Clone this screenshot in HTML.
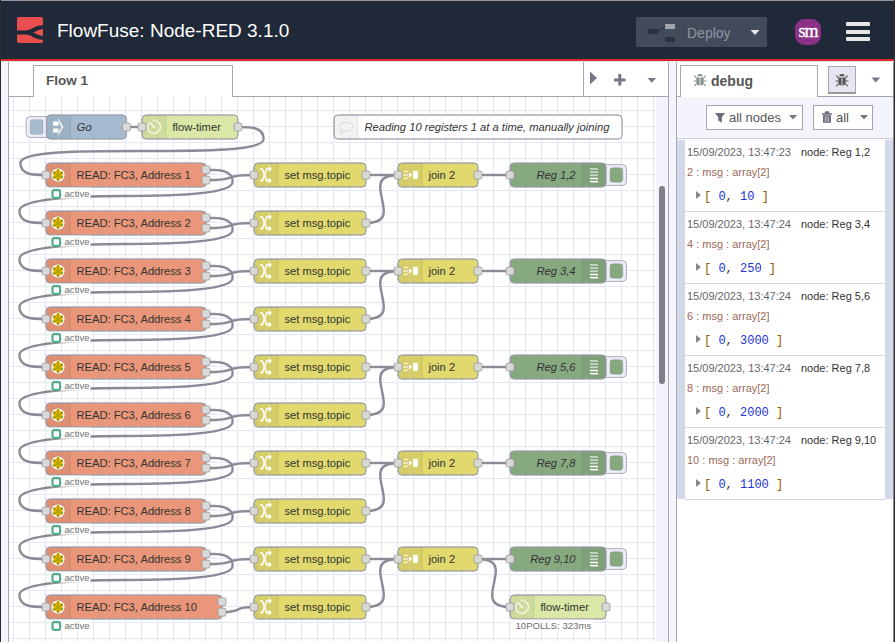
<!DOCTYPE html>
<html><head><meta charset="utf-8">
<style>
*{box-sizing:border-box}
html,body{margin:0;padding:0}
body{width:895px;height:642px;overflow:hidden;position:relative;background:#fff;font-family:"Liberation Sans",sans-serif}
.abs{position:absolute}
#topline{left:0;top:0;width:895px;height:1px;background:#9d939a}
#leftline{left:0;top:0;width:1px;height:642px;background:#2b2b2f}
#header{left:1px;top:1px;width:894px;height:58px;background:#1f2937}
#redline{left:1px;top:59px;width:894px;height:2px;background:#db2a2c}
#paleline{left:1px;top:61px;width:893px;height:1px;background:#e3e8ef}
#logo{left:17px;top:17px;width:26px;height:26px;border-radius:2px;background:#ea4f4f;overflow:hidden}
#title{left:57px;top:18.5px;font-size:19px;color:#fff;white-space:nowrap;line-height:24px}
#deploy{left:636px;top:17px;width:131px;height:30px;background:#414b59}
#deploytxt{left:687px;top:24px;font-size:14px;color:#8d97a3;line-height:18px}
#avatar{left:795px;top:19px;width:26px;height:26px;border-radius:9.5px;background:#8a3288;color:#fff;font-family:"Liberation Serif",serif;font-size:18px;text-align:center;line-height:25px;letter-spacing:-1.1px;padding-left:0px;-webkit-text-stroke:0.35px #fff}
.hb{left:846px;width:24px;height:4px;background:#e6e6e6;border-radius:1px}
#wsleft{left:1px;top:61px;width:7px;height:581px;background:#f3f4fc}
#wsborderL{left:8px;top:61px;width:1px;height:581px;background:#a6a6b2}
#tabbar{left:9px;top:61px;width:659px;height:36px;background:#fff;border-bottom:1px solid #a6a6b2}
#tab1{left:33px;top:65px;width:200px;height:32px;background:#fff;border:1px solid #a6a6b2;border-bottom:none}
#tab1txt{left:46px;top:72.5px;font-size:13.5px;font-weight:bold;color:#555;line-height:16px}
#tabdiv{left:583px;top:61px;width:1px;height:35px;background:#a6a6b2}
#wsborderR{left:668px;top:61px;width:1px;height:581px;background:#a6a6b2}
#sep{left:669px;top:61px;width:7px;height:581px;background:#f3f4fc}
#sbborder{left:676px;top:61px;width:1px;height:581px;background:#a6a6b2}
#sidebar{left:677px;top:61px;width:216px;height:581px;background:#fff}
#redge{left:894px;top:0px;width:1px;height:642px;background:#2f2b30}
#redge2{left:893px;top:61px;width:1px;height:581px;background:#8e8c92}
#sbtabbar{left:677px;top:61px;width:216px;height:36px;background:#fff;border-bottom:1px solid #a6a6b2}
#dbgtab{left:680px;top:65px;width:138px;height:32px;background:#fff;border:1px solid #a6a6b2;border-bottom:none}
#dbgtxt{left:711px;top:72.5px;font-size:14px;font-weight:bold;color:#555;line-height:16px}
#bugbtn{left:828px;top:66px;width:28px;height:28px;background:#e6e6f2;border:1px solid #a6a6b2;border-bottom:2px solid #999}
#toolbar{left:677px;top:97px;width:216px;height:42px;background:#f3f4fc;border-bottom:1px solid #cdcdd6}
.tbtn{top:105px;height:25px;background:#fff;border:1px solid #a6a6b2}
.tbtxt{top:110px;font-size:13px;color:#555;line-height:16px;white-space:nowrap}
#scrolltrack{left:656px;top:97px;width:12px;height:545px;background:#f3f4fc}
#thumb{left:659px;top:186px;width:6px;height:198px;background:#7f7f8a;border-radius:3px}
#msgs{left:677px;top:140px;width:216px;height:359px;background:#d4d9ea}
.msg{position:absolute;left:685px;width:200px;height:72px;background:#fff;border-bottom:1px solid #d4d9ea}
.mtime{position:absolute;left:2px;top:5px;font-size:11px;color:#666;white-space:nowrap;line-height:14px}
.mnode{position:absolute;left:116px;top:5px;font-size:11px;color:#333;white-space:nowrap;line-height:14px}
.mtopic{position:absolute;left:2px;top:25px;font-size:11px;color:#a0685a;white-space:nowrap;line-height:14px}
.mval{position:absolute;left:11px;top:50px;font-family:"Liberation Mono",monospace;font-size:12px;color:#333;white-space:pre;line-height:14px}
.num{color:#2033d6}
.br{color:#8a5a00}
.tri{display:inline-block;width:0;height:0;border-left:5px solid #888;border-top:4px solid transparent;border-bottom:4px solid transparent;margin-right:3px;vertical-align:1px}
svg text.lbl{font-family:"Liberation Sans",sans-serif;font-size:11.2px;fill:#333}
svg text.st{font-family:"Liberation Sans",sans-serif;font-size:9.6px;fill:#6e6e6e}
svg .port{fill:#d9d9d9;stroke:#999;stroke-width:0.8}
</style></head><body>
<div id="header" class="abs"></div>
<div id="topline" class="abs"></div>
<div id="leftline" class="abs"></div>
<div id="redline" class="abs"></div>
<div id="logo" class="abs"><svg width="26" height="26" viewBox="0 0 26 26"><g fill="none" stroke="#1f2937" stroke-width="4.2"><path d="M0 15.5 H9 C16 15.5 18 10 26 10"/><path d="M9 15.5 C16 15.5 18 21 26 21"/></g></svg></div>
<div id="title" class="abs">FlowFuse: Node-RED 3.1.0</div>
<div id="deploy" class="abs"></div>
<svg class="abs" style="left:636px;top:17px" width="131" height="30">
<rect x="12" y="12" width="10" height="5" fill="#2a323e"/><path d="M21.5 14.5 L29.5 9" stroke="#2a323e" stroke-width="1.2"/><rect x="29" y="7" width="10" height="5" fill="#a3a3ad"/><rect x="29" y="20" width="10" height="5" fill="#2a323e"/>
<path d="M114.5 13 h9 l-4.5 5 z" fill="#e8e8ee"/>
</svg>
<div id="deploytxt" class="abs">Deploy</div>
<div id="avatar" class="abs">sm</div>
<div class="abs hb" style="top:22px"></div>
<div class="abs hb" style="top:30px"></div>
<div class="abs hb" style="top:37px"></div>

<div id="wsleft" class="abs"></div>
<div id="wsborderL" class="abs"></div>
<div id="tabbar" class="abs"></div>
<div id="tab1" class="abs"></div>
<div id="tab1txt" class="abs">Flow 1</div>
<div id="tabdiv" class="abs"></div>
<svg class="abs" style="left:584px;top:61px" width="84" height="35">
<path d="M6 10.5 L13 17 L6 23.5 z" fill="#777784"/>
<path d="M30 19 h11.5 M35.75 13 v11.5" stroke="#777784" stroke-width="3"/>
<path d="M63.5 17 h8.6 l-4.3 4.8 z" fill="#777784"/>
</svg>
<div id="wsborderR" class="abs"></div>
<div id="sep" class="abs"></div>
<div id="sbborder" class="abs"></div>
<div id="sidebar" class="abs"></div>
<div id="redge2" class="abs"></div><div id="redge" class="abs"></div>

<svg class="abs" style="left:9px;top:97px" width="659" height="545" viewBox="9 97 659 545">
<path d="M13.5 97V642 M29.5 97V642 M45.5 97V642 M61.5 97V642 M77.5 97V642 M93.5 97V642 M109.5 97V642 M125.5 97V642 M141.5 97V642 M157.5 97V642 M173.5 97V642 M189.5 97V642 M205.5 97V642 M221.5 97V642 M237.5 97V642 M253.5 97V642 M269.5 97V642 M285.5 97V642 M301.5 97V642 M317.5 97V642 M333.5 97V642 M349.5 97V642 M365.5 97V642 M381.5 97V642 M397.5 97V642 M413.5 97V642 M429.5 97V642 M445.5 97V642 M461.5 97V642 M477.5 97V642 M493.5 97V642 M509.5 97V642 M525.5 97V642 M541.5 97V642 M557.5 97V642 M573.5 97V642 M589.5 97V642 M605.5 97V642 M621.5 97V642 M637.5 97V642 M653.5 97V642 M9 110.5H656 M9 126.5H656 M9 142.5H656 M9 158.5H656 M9 174.5H656 M9 190.5H656 M9 206.5H656 M9 222.5H656 M9 238.5H656 M9 254.5H656 M9 270.5H656 M9 286.5H656 M9 302.5H656 M9 318.5H656 M9 334.5H656 M9 350.5H656 M9 366.5H656 M9 382.5H656 M9 398.5H656 M9 414.5H656 M9 430.5H656 M9 446.5H656 M9 462.5H656 M9 478.5H656 M9 494.5H656 M9 510.5H656 M9 526.5H656 M9 542.5H656 M9 558.5H656 M9 574.5H656 M9 590.5H656 M9 606.5H656 M9 622.5H656 M9 638.5H656" stroke="#e6e7f6" stroke-width="1" fill="none"/>
<g fill="none" stroke="#8b8b98" stroke-width="2.4"><path d="M 126.4 127 C 138.1 127 130.3 127 142 127"/><path d="M 238 127 C 250.8 127 263.6 127 263.6 139 C 263.6 151 202.8 151 142 151 C 81.2 151 20.4 151 20.4 163 C 20.4 175 33.2 175 46 175"/><path d="M 206 169.8 C 219.32 169.8 232.64 169.8 232.64 181.8 C 232.64 193.8 179.32 196 126 196 C 72.68 196 19.36 199 19.36 211 C 19.36 223 32.68 223 46 223"/><path d="M 206 180.2 C 242.21 180.2 217.79 175 254 175"/><path d="M 366 175 C 390 175 374 175 398 175"/><path d="M 478 175 C 502 175 486 175 510 175"/><path d="M 206 217.8 C 219.32 217.8 232.64 217.8 232.64 229.8 C 232.64 241.8 179.32 244 126 244 C 72.68 244 19.36 247 19.36 259 C 19.36 271 32.68 271 46 271"/><path d="M 206 228.2 C 242.21 228.2 217.79 223 254 223"/><path d="M 366 223 C 409.27 223 354.73 175 398 175"/><path d="M 206 265.8 C 219.32 265.8 232.64 265.8 232.64 277.8 C 232.64 289.8 179.32 292 126 292 C 72.68 292 19.36 295 19.36 307 C 19.36 319 32.68 319 46 319"/><path d="M 206 276.2 C 242.21 276.2 217.79 271 254 271"/><path d="M 366 271 C 390 271 374 271 398 271"/><path d="M 478 271 C 502 271 486 271 510 271"/><path d="M 206 313.8 C 219.32 313.8 232.64 313.8 232.64 325.8 C 232.64 337.8 179.32 340 126 340 C 72.68 340 19.36 343 19.36 355 C 19.36 367 32.68 367 46 367"/><path d="M 206 324.2 C 242.21 324.2 217.79 319 254 319"/><path d="M 366 319 C 409.27 319 354.73 271 398 271"/><path d="M 206 361.8 C 219.32 361.8 232.64 361.8 232.64 373.8 C 232.64 385.8 179.32 388 126 388 C 72.68 388 19.36 391 19.36 403 C 19.36 415 32.68 415 46 415"/><path d="M 206 372.2 C 242.21 372.2 217.79 367 254 367"/><path d="M 366 367 C 390 367 374 367 398 367"/><path d="M 478 367 C 502 367 486 367 510 367"/><path d="M 206 409.8 C 219.32 409.8 232.64 409.8 232.64 421.8 C 232.64 433.8 179.32 436 126 436 C 72.68 436 19.36 439 19.36 451 C 19.36 463 32.68 463 46 463"/><path d="M 206 420.2 C 242.21 420.2 217.79 415 254 415"/><path d="M 366 415 C 409.27 415 354.73 367 398 367"/><path d="M 206 457.8 C 219.32 457.8 232.64 457.8 232.64 469.8 C 232.64 481.8 179.32 484 126 484 C 72.68 484 19.36 487 19.36 499 C 19.36 511 32.68 511 46 511"/><path d="M 206 468.2 C 242.21 468.2 217.79 463 254 463"/><path d="M 366 463 C 390 463 374 463 398 463"/><path d="M 478 463 C 502 463 486 463 510 463"/><path d="M 206 505.8 C 219.32 505.8 232.64 505.8 232.64 517.8 C 232.64 529.8 179.32 532 126 532 C 72.68 532 19.36 535 19.36 547 C 19.36 559 32.68 559 46 559"/><path d="M 206 516.2 C 242.21 516.2 217.79 511 254 511"/><path d="M 366 511 C 409.27 511 354.73 463 398 463"/><path d="M 206 553.8 C 219.32 553.8 232.64 553.8 232.64 565.8 C 232.64 577.8 179.32 580 126 580 C 72.68 580 19.36 583 19.36 595 C 19.36 607 32.68 607 46 607"/><path d="M 206 564.2 C 242.21 564.2 217.79 559 254 559"/><path d="M 366 559 C 390 559 374 559 398 559"/><path d="M 478 559 C 502 559 486 559 510 559"/><path d="M 222 612.2 C 246.31 612.2 229.69 607 254 607"/><path d="M 366 607 C 409.27 607 354.73 559 398 559"/><path d="M 478 559 C 521.27 559 466.73 607 510 607"/></g>
<rect x="26.2" y="116.6" width="25.6" height="20.8" rx="4" fill="#eeeef8" stroke="#9c9cab" stroke-width="0.8"/>
<rect x="30.2" y="119.8" width="12.8" height="14.4" rx="2" fill="#a6bbcf" stroke="#999" stroke-width="0.5"/>
<rect x="46.4" y="115" width="80" height="24" rx="4" fill="#a6bbcf" stroke="#9c9cab" stroke-width="0.8"/>
<path d="M50.4 115 h20 v24 h-20 a4 4 0 0 1 -4 -4 v-16 a4 4 0 0 1 4 -4 z" fill="rgba(0,0,0,0.05)"/>
<line x1="70.4" y1="115" x2="70.4" y2="139" stroke="rgba(0,0,0,0.1)" stroke-width="0.8"/>
<rect x="46.4" y="115" width="80" height="24" rx="4" fill="none" stroke="#9c9cab" stroke-width="0.8"/>
<g transform="translate(58.4,127)"><path d="M-5.3 -5.5 h5.4 v4.2 h-5.4 z M-5.3 1.4 h5.4 v4 h-5.4 z M-0.9 -9.6 L5 0 L-0.9 9.6 L0.4 5.2 L3.1 0 L0.4 -5.2 z" fill="#fff"/></g>
<text x="76.8" y="131" class="lbl" style="font-style:italic;">Go</text>
<rect x="122.4" y="123" width="8" height="8" rx="2" class="port"/>
<rect x="142" y="115" width="96" height="24" rx="4" fill="#d9e8a6" stroke="#9c9cab" stroke-width="0.8"/>
<path d="M146 115 h20 v24 h-20 a4 4 0 0 1 -4 -4 v-16 a4 4 0 0 1 4 -4 z" fill="rgba(0,0,0,0.05)"/>
<line x1="166" y1="115" x2="166" y2="139" stroke="rgba(0,0,0,0.1)" stroke-width="0.8"/>
<rect x="142" y="115" width="96" height="24" rx="4" fill="none" stroke="#9c9cab" stroke-width="0.8"/>
<g transform="translate(154,127)"><g fill="none" stroke="#fafaf0" stroke-width="1.3"><path d="M1.6 -6.2 A6.4 6.4 0 1 1 -4.6 -4.4"/><line x1="0" y1="0" x2="-4.2" y2="-4.5"/></g><circle cx="-0.3" cy="-6.5" r="1.1" fill="#fafaf0"/><circle cx="0" cy="0" r="1.1" fill="#fafaf0"/></g>
<text x="172.4" y="131" class="lbl" style="">flow-timer</text>
<rect x="138" y="123" width="8" height="8" rx="2" class="port"/>
<rect x="234" y="123" width="8" height="8" rx="2" class="port"/>
<rect x="334" y="115" width="288" height="24" rx="4" fill="#ffffff" stroke="#9c9cab" stroke-width="0.8"/>
<path d="M338 115 h20 v24 h-20 a4 4 0 0 1 -4 -4 v-16 a4 4 0 0 1 4 -4 z" fill="rgba(0,0,0,0.05)"/>
<line x1="358" y1="115" x2="358" y2="139" stroke="rgba(0,0,0,0.1)" stroke-width="0.8"/>
<rect x="334" y="115" width="288" height="24" rx="4" fill="none" stroke="#9c9cab" stroke-width="0.8"/>
<g transform="translate(346,127)"><path d="M0 -4.5 c4.5 0 7 2 7 4.3 c0 2.4 -3 4.3 -7 4.3 c-0.8 0 -1.6 -0.1 -2.3 -0.2 l-3.2 2.3 l1 -3 c-1.6 -0.8 -2.5 -2 -2.5 -3.4 c0 -2.3 2.5 -4.3 7 -4.3 z" fill="none" stroke="#d6d6d6" stroke-width="1" transform="translate(0,0)"/></g>
<text x="364.4" y="131" class="lbl" style="font-style:italic;">Reading 10 registers 1 at a time, manually joining</text>
<rect x="46" y="163" width="160" height="24" rx="4" fill="#e9967a" stroke="#9c9cab" stroke-width="0.8"/>
<path d="M50 163 h20 v24 h-20 a4 4 0 0 1 -4 -4 v-16 a4 4 0 0 1 4 -4 z" fill="rgba(0,0,0,0.05)"/>
<line x1="70" y1="163" x2="70" y2="187" stroke="rgba(0,0,0,0.1)" stroke-width="0.8"/>
<rect x="46" y="163" width="160" height="24" rx="4" fill="none" stroke="#9c9cab" stroke-width="0.8"/>
<g transform="translate(58,175)"><circle r="6.6" fill="#fff"/><path d="M0.00 -5.90 L2.25 -3.90 L5.11 -2.95 L4.50 0.00 L5.11 2.95 L2.25 3.90 L0.00 5.90 L-2.25 3.90 L-5.11 2.95 L-4.50 0.00 L-5.11 -2.95 L-2.25 -3.90 z" fill="#f4aa00"/><path d="M0 0 L0.00 -5.20 M0 0 L4.50 -2.60 M0 0 L4.50 2.60 M0 0 L0.00 5.20 M0 0 L-4.50 2.60 M0 0 L-4.50 -2.60" stroke="#a8ac00" stroke-width="1.3"/><circle r="1.6" fill="#a8ac00"/><circle cx="0.00" cy="-4.90" r="0.9" fill="#6d9424"/><circle cx="4.24" cy="-2.45" r="0.9" fill="#6d9424"/><circle cx="4.24" cy="2.45" r="0.9" fill="#6d9424"/><circle cx="0.00" cy="4.90" r="0.9" fill="#6d9424"/><circle cx="-4.24" cy="2.45" r="0.9" fill="#6d9424"/><circle cx="-4.24" cy="-2.45" r="0.9" fill="#6d9424"/></g>
<text x="76.4" y="179" class="lbl" style="">READ: FC3, Address 1</text>
<rect x="42" y="171" width="8" height="8" rx="2" class="port"/>
<rect x="202" y="165.8" width="8" height="8" rx="2" class="port"/>
<rect x="202" y="176.2" width="8" height="8" rx="2" class="port"/>
<rect x="51" y="187.6" width="39.5" height="11" fill="#fff"/>
<rect x="52.5" y="190.2" width="7.6" height="7.6" rx="1.6" fill="#fff" stroke="#55aa88" stroke-width="2.2"/>
<text x="64.5" y="197.3" class="st">active</text>
<rect x="254" y="163" width="112" height="24" rx="4" fill="#e2d96e" stroke="#9c9cab" stroke-width="0.8"/>
<path d="M258 163 h20 v24 h-20 a4 4 0 0 1 -4 -4 v-16 a4 4 0 0 1 4 -4 z" fill="rgba(0,0,0,0.05)"/>
<line x1="278" y1="163" x2="278" y2="187" stroke="rgba(0,0,0,0.1)" stroke-width="0.8"/>
<rect x="254" y="163" width="112" height="24" rx="4" fill="none" stroke="#9c9cab" stroke-width="0.8"/>
<g transform="translate(266,175)"><g fill="none" stroke="#fff" stroke-width="1.6"><path d="M-6 -6 H-3.6 L0.6 5.6 H3.2"/><path d="M-6 5.6 H-3.6 L0.6 -6 H3.2"/></g><path d="M2.6 -9.2 L5.9 -6 L2.6 -2.8 z M2.6 2.4 L5.9 5.6 L2.6 8.8 z" fill="#fff"/></g>
<text x="284.4" y="179" class="lbl" style="">set msg.topic</text>
<rect x="250" y="171" width="8" height="8" rx="2" class="port"/>
<rect x="362" y="171" width="8" height="8" rx="2" class="port"/>
<rect x="398" y="163" width="80" height="24" rx="4" fill="#e2d96e" stroke="#9c9cab" stroke-width="0.8"/>
<path d="M402 163 h20 v24 h-20 a4 4 0 0 1 -4 -4 v-16 a4 4 0 0 1 4 -4 z" fill="rgba(0,0,0,0.05)"/>
<line x1="422" y1="163" x2="422" y2="187" stroke="rgba(0,0,0,0.1)" stroke-width="0.8"/>
<rect x="398" y="163" width="80" height="24" rx="4" fill="none" stroke="#9c9cab" stroke-width="0.8"/>
<g transform="translate(410,175)"><g fill="#fff"><rect x="-6.35" y="-4.25" width="1.5" height="1.5"/><rect x="-6.35" y="-0.75" width="1.5" height="1.5"/><rect x="-6.35" y="2.55" width="1.5" height="1.5"/><rect x="-4.05" y="-4.25" width="1.5" height="1.5"/><rect x="-4.05" y="-0.75" width="1.5" height="1.5"/><rect x="-4.05" y="2.55" width="1.5" height="1.5"/><path d="M-1 -3 L2 0 L-1 3 z"/><rect x="3.1" y="-4.1" width="4.8" height="8"/></g></g>
<text x="428.4" y="179" class="lbl" style="">join 2</text>
<rect x="394" y="171" width="8" height="8" rx="2" class="port"/>
<rect x="474" y="171" width="8" height="8" rx="2" class="port"/>
<rect x="600" y="164.6" width="26.4" height="20.8" rx="4" fill="#eeeef8" stroke="#9c9cab" stroke-width="0.8"/>
<rect x="510" y="163" width="96" height="24" rx="4" fill="#87a980" stroke="#9c9cab" stroke-width="0.8"/>
<path d="M582 163 h20 a4 4 0 0 1 4 4 v16 a4 4 0 0 1 -4 4 h-20 z" fill="rgba(0,0,0,0.05)"/>
<line x1="582" y1="163" x2="582" y2="187" stroke="rgba(0,0,0,0.1)" stroke-width="0.8"/>
<rect x="510" y="163" width="96" height="24" rx="4" fill="none" stroke="#9c9cab" stroke-width="0.8"/>
<g transform="translate(594,175)"><g fill="#fff"><rect x="-4" y="-6.8" width="8" height="1.6" opacity="0.6"/><rect x="-4" y="-3.7" width="8" height="1.6" opacity="0.6"/><rect x="-4" y="-0.6" width="8" height="1.6" opacity="0.6"/><rect x="-4" y="2.7" width="8" height="1.6"/><rect x="-4" y="5.9" width="8" height="1.6"/></g></g>
<text x="575.6" y="179" text-anchor="end" class="lbl" style="font-style:italic;">Reg 1,2</text>
<rect x="506" y="171" width="8" height="8" rx="2" class="port"/>
<rect x="610" y="167.8" width="12.8" height="14.4" rx="2.5" fill="#87a980" stroke="#999" stroke-width="0.5"/>
<rect x="46" y="211" width="160" height="24" rx="4" fill="#e9967a" stroke="#9c9cab" stroke-width="0.8"/>
<path d="M50 211 h20 v24 h-20 a4 4 0 0 1 -4 -4 v-16 a4 4 0 0 1 4 -4 z" fill="rgba(0,0,0,0.05)"/>
<line x1="70" y1="211" x2="70" y2="235" stroke="rgba(0,0,0,0.1)" stroke-width="0.8"/>
<rect x="46" y="211" width="160" height="24" rx="4" fill="none" stroke="#9c9cab" stroke-width="0.8"/>
<g transform="translate(58,223)"><circle r="6.6" fill="#fff"/><path d="M0.00 -5.90 L2.25 -3.90 L5.11 -2.95 L4.50 0.00 L5.11 2.95 L2.25 3.90 L0.00 5.90 L-2.25 3.90 L-5.11 2.95 L-4.50 0.00 L-5.11 -2.95 L-2.25 -3.90 z" fill="#f4aa00"/><path d="M0 0 L0.00 -5.20 M0 0 L4.50 -2.60 M0 0 L4.50 2.60 M0 0 L0.00 5.20 M0 0 L-4.50 2.60 M0 0 L-4.50 -2.60" stroke="#a8ac00" stroke-width="1.3"/><circle r="1.6" fill="#a8ac00"/><circle cx="0.00" cy="-4.90" r="0.9" fill="#6d9424"/><circle cx="4.24" cy="-2.45" r="0.9" fill="#6d9424"/><circle cx="4.24" cy="2.45" r="0.9" fill="#6d9424"/><circle cx="0.00" cy="4.90" r="0.9" fill="#6d9424"/><circle cx="-4.24" cy="2.45" r="0.9" fill="#6d9424"/><circle cx="-4.24" cy="-2.45" r="0.9" fill="#6d9424"/></g>
<text x="76.4" y="227" class="lbl" style="">READ: FC3, Address 2</text>
<rect x="42" y="219" width="8" height="8" rx="2" class="port"/>
<rect x="202" y="213.8" width="8" height="8" rx="2" class="port"/>
<rect x="202" y="224.2" width="8" height="8" rx="2" class="port"/>
<rect x="51" y="235.6" width="39.5" height="11" fill="#fff"/>
<rect x="52.5" y="238.2" width="7.6" height="7.6" rx="1.6" fill="#fff" stroke="#55aa88" stroke-width="2.2"/>
<text x="64.5" y="245.3" class="st">active</text>
<rect x="254" y="211" width="112" height="24" rx="4" fill="#e2d96e" stroke="#9c9cab" stroke-width="0.8"/>
<path d="M258 211 h20 v24 h-20 a4 4 0 0 1 -4 -4 v-16 a4 4 0 0 1 4 -4 z" fill="rgba(0,0,0,0.05)"/>
<line x1="278" y1="211" x2="278" y2="235" stroke="rgba(0,0,0,0.1)" stroke-width="0.8"/>
<rect x="254" y="211" width="112" height="24" rx="4" fill="none" stroke="#9c9cab" stroke-width="0.8"/>
<g transform="translate(266,223)"><g fill="none" stroke="#fff" stroke-width="1.6"><path d="M-6 -6 H-3.6 L0.6 5.6 H3.2"/><path d="M-6 5.6 H-3.6 L0.6 -6 H3.2"/></g><path d="M2.6 -9.2 L5.9 -6 L2.6 -2.8 z M2.6 2.4 L5.9 5.6 L2.6 8.8 z" fill="#fff"/></g>
<text x="284.4" y="227" class="lbl" style="">set msg.topic</text>
<rect x="250" y="219" width="8" height="8" rx="2" class="port"/>
<rect x="362" y="219" width="8" height="8" rx="2" class="port"/>
<rect x="46" y="259" width="160" height="24" rx="4" fill="#e9967a" stroke="#9c9cab" stroke-width="0.8"/>
<path d="M50 259 h20 v24 h-20 a4 4 0 0 1 -4 -4 v-16 a4 4 0 0 1 4 -4 z" fill="rgba(0,0,0,0.05)"/>
<line x1="70" y1="259" x2="70" y2="283" stroke="rgba(0,0,0,0.1)" stroke-width="0.8"/>
<rect x="46" y="259" width="160" height="24" rx="4" fill="none" stroke="#9c9cab" stroke-width="0.8"/>
<g transform="translate(58,271)"><circle r="6.6" fill="#fff"/><path d="M0.00 -5.90 L2.25 -3.90 L5.11 -2.95 L4.50 0.00 L5.11 2.95 L2.25 3.90 L0.00 5.90 L-2.25 3.90 L-5.11 2.95 L-4.50 0.00 L-5.11 -2.95 L-2.25 -3.90 z" fill="#f4aa00"/><path d="M0 0 L0.00 -5.20 M0 0 L4.50 -2.60 M0 0 L4.50 2.60 M0 0 L0.00 5.20 M0 0 L-4.50 2.60 M0 0 L-4.50 -2.60" stroke="#a8ac00" stroke-width="1.3"/><circle r="1.6" fill="#a8ac00"/><circle cx="0.00" cy="-4.90" r="0.9" fill="#6d9424"/><circle cx="4.24" cy="-2.45" r="0.9" fill="#6d9424"/><circle cx="4.24" cy="2.45" r="0.9" fill="#6d9424"/><circle cx="0.00" cy="4.90" r="0.9" fill="#6d9424"/><circle cx="-4.24" cy="2.45" r="0.9" fill="#6d9424"/><circle cx="-4.24" cy="-2.45" r="0.9" fill="#6d9424"/></g>
<text x="76.4" y="275" class="lbl" style="">READ: FC3, Address 3</text>
<rect x="42" y="267" width="8" height="8" rx="2" class="port"/>
<rect x="202" y="261.8" width="8" height="8" rx="2" class="port"/>
<rect x="202" y="272.2" width="8" height="8" rx="2" class="port"/>
<rect x="51" y="283.6" width="39.5" height="11" fill="#fff"/>
<rect x="52.5" y="286.2" width="7.6" height="7.6" rx="1.6" fill="#fff" stroke="#55aa88" stroke-width="2.2"/>
<text x="64.5" y="293.3" class="st">active</text>
<rect x="254" y="259" width="112" height="24" rx="4" fill="#e2d96e" stroke="#9c9cab" stroke-width="0.8"/>
<path d="M258 259 h20 v24 h-20 a4 4 0 0 1 -4 -4 v-16 a4 4 0 0 1 4 -4 z" fill="rgba(0,0,0,0.05)"/>
<line x1="278" y1="259" x2="278" y2="283" stroke="rgba(0,0,0,0.1)" stroke-width="0.8"/>
<rect x="254" y="259" width="112" height="24" rx="4" fill="none" stroke="#9c9cab" stroke-width="0.8"/>
<g transform="translate(266,271)"><g fill="none" stroke="#fff" stroke-width="1.6"><path d="M-6 -6 H-3.6 L0.6 5.6 H3.2"/><path d="M-6 5.6 H-3.6 L0.6 -6 H3.2"/></g><path d="M2.6 -9.2 L5.9 -6 L2.6 -2.8 z M2.6 2.4 L5.9 5.6 L2.6 8.8 z" fill="#fff"/></g>
<text x="284.4" y="275" class="lbl" style="">set msg.topic</text>
<rect x="250" y="267" width="8" height="8" rx="2" class="port"/>
<rect x="362" y="267" width="8" height="8" rx="2" class="port"/>
<rect x="398" y="259" width="80" height="24" rx="4" fill="#e2d96e" stroke="#9c9cab" stroke-width="0.8"/>
<path d="M402 259 h20 v24 h-20 a4 4 0 0 1 -4 -4 v-16 a4 4 0 0 1 4 -4 z" fill="rgba(0,0,0,0.05)"/>
<line x1="422" y1="259" x2="422" y2="283" stroke="rgba(0,0,0,0.1)" stroke-width="0.8"/>
<rect x="398" y="259" width="80" height="24" rx="4" fill="none" stroke="#9c9cab" stroke-width="0.8"/>
<g transform="translate(410,271)"><g fill="#fff"><rect x="-6.35" y="-4.25" width="1.5" height="1.5"/><rect x="-6.35" y="-0.75" width="1.5" height="1.5"/><rect x="-6.35" y="2.55" width="1.5" height="1.5"/><rect x="-4.05" y="-4.25" width="1.5" height="1.5"/><rect x="-4.05" y="-0.75" width="1.5" height="1.5"/><rect x="-4.05" y="2.55" width="1.5" height="1.5"/><path d="M-1 -3 L2 0 L-1 3 z"/><rect x="3.1" y="-4.1" width="4.8" height="8"/></g></g>
<text x="428.4" y="275" class="lbl" style="">join 2</text>
<rect x="394" y="267" width="8" height="8" rx="2" class="port"/>
<rect x="474" y="267" width="8" height="8" rx="2" class="port"/>
<rect x="600" y="260.6" width="26.4" height="20.8" rx="4" fill="#eeeef8" stroke="#9c9cab" stroke-width="0.8"/>
<rect x="510" y="259" width="96" height="24" rx="4" fill="#87a980" stroke="#9c9cab" stroke-width="0.8"/>
<path d="M582 259 h20 a4 4 0 0 1 4 4 v16 a4 4 0 0 1 -4 4 h-20 z" fill="rgba(0,0,0,0.05)"/>
<line x1="582" y1="259" x2="582" y2="283" stroke="rgba(0,0,0,0.1)" stroke-width="0.8"/>
<rect x="510" y="259" width="96" height="24" rx="4" fill="none" stroke="#9c9cab" stroke-width="0.8"/>
<g transform="translate(594,271)"><g fill="#fff"><rect x="-4" y="-6.8" width="8" height="1.6" opacity="0.6"/><rect x="-4" y="-3.7" width="8" height="1.6" opacity="0.6"/><rect x="-4" y="-0.6" width="8" height="1.6" opacity="0.6"/><rect x="-4" y="2.7" width="8" height="1.6"/><rect x="-4" y="5.9" width="8" height="1.6"/></g></g>
<text x="575.6" y="275" text-anchor="end" class="lbl" style="font-style:italic;">Reg 3,4</text>
<rect x="506" y="267" width="8" height="8" rx="2" class="port"/>
<rect x="610" y="263.8" width="12.8" height="14.4" rx="2.5" fill="#87a980" stroke="#999" stroke-width="0.5"/>
<rect x="46" y="307" width="160" height="24" rx="4" fill="#e9967a" stroke="#9c9cab" stroke-width="0.8"/>
<path d="M50 307 h20 v24 h-20 a4 4 0 0 1 -4 -4 v-16 a4 4 0 0 1 4 -4 z" fill="rgba(0,0,0,0.05)"/>
<line x1="70" y1="307" x2="70" y2="331" stroke="rgba(0,0,0,0.1)" stroke-width="0.8"/>
<rect x="46" y="307" width="160" height="24" rx="4" fill="none" stroke="#9c9cab" stroke-width="0.8"/>
<g transform="translate(58,319)"><circle r="6.6" fill="#fff"/><path d="M0.00 -5.90 L2.25 -3.90 L5.11 -2.95 L4.50 0.00 L5.11 2.95 L2.25 3.90 L0.00 5.90 L-2.25 3.90 L-5.11 2.95 L-4.50 0.00 L-5.11 -2.95 L-2.25 -3.90 z" fill="#f4aa00"/><path d="M0 0 L0.00 -5.20 M0 0 L4.50 -2.60 M0 0 L4.50 2.60 M0 0 L0.00 5.20 M0 0 L-4.50 2.60 M0 0 L-4.50 -2.60" stroke="#a8ac00" stroke-width="1.3"/><circle r="1.6" fill="#a8ac00"/><circle cx="0.00" cy="-4.90" r="0.9" fill="#6d9424"/><circle cx="4.24" cy="-2.45" r="0.9" fill="#6d9424"/><circle cx="4.24" cy="2.45" r="0.9" fill="#6d9424"/><circle cx="0.00" cy="4.90" r="0.9" fill="#6d9424"/><circle cx="-4.24" cy="2.45" r="0.9" fill="#6d9424"/><circle cx="-4.24" cy="-2.45" r="0.9" fill="#6d9424"/></g>
<text x="76.4" y="323" class="lbl" style="">READ: FC3, Address 4</text>
<rect x="42" y="315" width="8" height="8" rx="2" class="port"/>
<rect x="202" y="309.8" width="8" height="8" rx="2" class="port"/>
<rect x="202" y="320.2" width="8" height="8" rx="2" class="port"/>
<rect x="51" y="331.6" width="39.5" height="11" fill="#fff"/>
<rect x="52.5" y="334.2" width="7.6" height="7.6" rx="1.6" fill="#fff" stroke="#55aa88" stroke-width="2.2"/>
<text x="64.5" y="341.3" class="st">active</text>
<rect x="254" y="307" width="112" height="24" rx="4" fill="#e2d96e" stroke="#9c9cab" stroke-width="0.8"/>
<path d="M258 307 h20 v24 h-20 a4 4 0 0 1 -4 -4 v-16 a4 4 0 0 1 4 -4 z" fill="rgba(0,0,0,0.05)"/>
<line x1="278" y1="307" x2="278" y2="331" stroke="rgba(0,0,0,0.1)" stroke-width="0.8"/>
<rect x="254" y="307" width="112" height="24" rx="4" fill="none" stroke="#9c9cab" stroke-width="0.8"/>
<g transform="translate(266,319)"><g fill="none" stroke="#fff" stroke-width="1.6"><path d="M-6 -6 H-3.6 L0.6 5.6 H3.2"/><path d="M-6 5.6 H-3.6 L0.6 -6 H3.2"/></g><path d="M2.6 -9.2 L5.9 -6 L2.6 -2.8 z M2.6 2.4 L5.9 5.6 L2.6 8.8 z" fill="#fff"/></g>
<text x="284.4" y="323" class="lbl" style="">set msg.topic</text>
<rect x="250" y="315" width="8" height="8" rx="2" class="port"/>
<rect x="362" y="315" width="8" height="8" rx="2" class="port"/>
<rect x="46" y="355" width="160" height="24" rx="4" fill="#e9967a" stroke="#9c9cab" stroke-width="0.8"/>
<path d="M50 355 h20 v24 h-20 a4 4 0 0 1 -4 -4 v-16 a4 4 0 0 1 4 -4 z" fill="rgba(0,0,0,0.05)"/>
<line x1="70" y1="355" x2="70" y2="379" stroke="rgba(0,0,0,0.1)" stroke-width="0.8"/>
<rect x="46" y="355" width="160" height="24" rx="4" fill="none" stroke="#9c9cab" stroke-width="0.8"/>
<g transform="translate(58,367)"><circle r="6.6" fill="#fff"/><path d="M0.00 -5.90 L2.25 -3.90 L5.11 -2.95 L4.50 0.00 L5.11 2.95 L2.25 3.90 L0.00 5.90 L-2.25 3.90 L-5.11 2.95 L-4.50 0.00 L-5.11 -2.95 L-2.25 -3.90 z" fill="#f4aa00"/><path d="M0 0 L0.00 -5.20 M0 0 L4.50 -2.60 M0 0 L4.50 2.60 M0 0 L0.00 5.20 M0 0 L-4.50 2.60 M0 0 L-4.50 -2.60" stroke="#a8ac00" stroke-width="1.3"/><circle r="1.6" fill="#a8ac00"/><circle cx="0.00" cy="-4.90" r="0.9" fill="#6d9424"/><circle cx="4.24" cy="-2.45" r="0.9" fill="#6d9424"/><circle cx="4.24" cy="2.45" r="0.9" fill="#6d9424"/><circle cx="0.00" cy="4.90" r="0.9" fill="#6d9424"/><circle cx="-4.24" cy="2.45" r="0.9" fill="#6d9424"/><circle cx="-4.24" cy="-2.45" r="0.9" fill="#6d9424"/></g>
<text x="76.4" y="371" class="lbl" style="">READ: FC3, Address 5</text>
<rect x="42" y="363" width="8" height="8" rx="2" class="port"/>
<rect x="202" y="357.8" width="8" height="8" rx="2" class="port"/>
<rect x="202" y="368.2" width="8" height="8" rx="2" class="port"/>
<rect x="51" y="379.6" width="39.5" height="11" fill="#fff"/>
<rect x="52.5" y="382.2" width="7.6" height="7.6" rx="1.6" fill="#fff" stroke="#55aa88" stroke-width="2.2"/>
<text x="64.5" y="389.3" class="st">active</text>
<rect x="254" y="355" width="112" height="24" rx="4" fill="#e2d96e" stroke="#9c9cab" stroke-width="0.8"/>
<path d="M258 355 h20 v24 h-20 a4 4 0 0 1 -4 -4 v-16 a4 4 0 0 1 4 -4 z" fill="rgba(0,0,0,0.05)"/>
<line x1="278" y1="355" x2="278" y2="379" stroke="rgba(0,0,0,0.1)" stroke-width="0.8"/>
<rect x="254" y="355" width="112" height="24" rx="4" fill="none" stroke="#9c9cab" stroke-width="0.8"/>
<g transform="translate(266,367)"><g fill="none" stroke="#fff" stroke-width="1.6"><path d="M-6 -6 H-3.6 L0.6 5.6 H3.2"/><path d="M-6 5.6 H-3.6 L0.6 -6 H3.2"/></g><path d="M2.6 -9.2 L5.9 -6 L2.6 -2.8 z M2.6 2.4 L5.9 5.6 L2.6 8.8 z" fill="#fff"/></g>
<text x="284.4" y="371" class="lbl" style="">set msg.topic</text>
<rect x="250" y="363" width="8" height="8" rx="2" class="port"/>
<rect x="362" y="363" width="8" height="8" rx="2" class="port"/>
<rect x="398" y="355" width="80" height="24" rx="4" fill="#e2d96e" stroke="#9c9cab" stroke-width="0.8"/>
<path d="M402 355 h20 v24 h-20 a4 4 0 0 1 -4 -4 v-16 a4 4 0 0 1 4 -4 z" fill="rgba(0,0,0,0.05)"/>
<line x1="422" y1="355" x2="422" y2="379" stroke="rgba(0,0,0,0.1)" stroke-width="0.8"/>
<rect x="398" y="355" width="80" height="24" rx="4" fill="none" stroke="#9c9cab" stroke-width="0.8"/>
<g transform="translate(410,367)"><g fill="#fff"><rect x="-6.35" y="-4.25" width="1.5" height="1.5"/><rect x="-6.35" y="-0.75" width="1.5" height="1.5"/><rect x="-6.35" y="2.55" width="1.5" height="1.5"/><rect x="-4.05" y="-4.25" width="1.5" height="1.5"/><rect x="-4.05" y="-0.75" width="1.5" height="1.5"/><rect x="-4.05" y="2.55" width="1.5" height="1.5"/><path d="M-1 -3 L2 0 L-1 3 z"/><rect x="3.1" y="-4.1" width="4.8" height="8"/></g></g>
<text x="428.4" y="371" class="lbl" style="">join 2</text>
<rect x="394" y="363" width="8" height="8" rx="2" class="port"/>
<rect x="474" y="363" width="8" height="8" rx="2" class="port"/>
<rect x="600" y="356.6" width="26.4" height="20.8" rx="4" fill="#eeeef8" stroke="#9c9cab" stroke-width="0.8"/>
<rect x="510" y="355" width="96" height="24" rx="4" fill="#87a980" stroke="#9c9cab" stroke-width="0.8"/>
<path d="M582 355 h20 a4 4 0 0 1 4 4 v16 a4 4 0 0 1 -4 4 h-20 z" fill="rgba(0,0,0,0.05)"/>
<line x1="582" y1="355" x2="582" y2="379" stroke="rgba(0,0,0,0.1)" stroke-width="0.8"/>
<rect x="510" y="355" width="96" height="24" rx="4" fill="none" stroke="#9c9cab" stroke-width="0.8"/>
<g transform="translate(594,367)"><g fill="#fff"><rect x="-4" y="-6.8" width="8" height="1.6" opacity="0.6"/><rect x="-4" y="-3.7" width="8" height="1.6" opacity="0.6"/><rect x="-4" y="-0.6" width="8" height="1.6" opacity="0.6"/><rect x="-4" y="2.7" width="8" height="1.6"/><rect x="-4" y="5.9" width="8" height="1.6"/></g></g>
<text x="575.6" y="371" text-anchor="end" class="lbl" style="font-style:italic;">Reg 5,6</text>
<rect x="506" y="363" width="8" height="8" rx="2" class="port"/>
<rect x="610" y="359.8" width="12.8" height="14.4" rx="2.5" fill="#87a980" stroke="#999" stroke-width="0.5"/>
<rect x="46" y="403" width="160" height="24" rx="4" fill="#e9967a" stroke="#9c9cab" stroke-width="0.8"/>
<path d="M50 403 h20 v24 h-20 a4 4 0 0 1 -4 -4 v-16 a4 4 0 0 1 4 -4 z" fill="rgba(0,0,0,0.05)"/>
<line x1="70" y1="403" x2="70" y2="427" stroke="rgba(0,0,0,0.1)" stroke-width="0.8"/>
<rect x="46" y="403" width="160" height="24" rx="4" fill="none" stroke="#9c9cab" stroke-width="0.8"/>
<g transform="translate(58,415)"><circle r="6.6" fill="#fff"/><path d="M0.00 -5.90 L2.25 -3.90 L5.11 -2.95 L4.50 0.00 L5.11 2.95 L2.25 3.90 L0.00 5.90 L-2.25 3.90 L-5.11 2.95 L-4.50 0.00 L-5.11 -2.95 L-2.25 -3.90 z" fill="#f4aa00"/><path d="M0 0 L0.00 -5.20 M0 0 L4.50 -2.60 M0 0 L4.50 2.60 M0 0 L0.00 5.20 M0 0 L-4.50 2.60 M0 0 L-4.50 -2.60" stroke="#a8ac00" stroke-width="1.3"/><circle r="1.6" fill="#a8ac00"/><circle cx="0.00" cy="-4.90" r="0.9" fill="#6d9424"/><circle cx="4.24" cy="-2.45" r="0.9" fill="#6d9424"/><circle cx="4.24" cy="2.45" r="0.9" fill="#6d9424"/><circle cx="0.00" cy="4.90" r="0.9" fill="#6d9424"/><circle cx="-4.24" cy="2.45" r="0.9" fill="#6d9424"/><circle cx="-4.24" cy="-2.45" r="0.9" fill="#6d9424"/></g>
<text x="76.4" y="419" class="lbl" style="">READ: FC3, Address 6</text>
<rect x="42" y="411" width="8" height="8" rx="2" class="port"/>
<rect x="202" y="405.8" width="8" height="8" rx="2" class="port"/>
<rect x="202" y="416.2" width="8" height="8" rx="2" class="port"/>
<rect x="51" y="427.6" width="39.5" height="11" fill="#fff"/>
<rect x="52.5" y="430.2" width="7.6" height="7.6" rx="1.6" fill="#fff" stroke="#55aa88" stroke-width="2.2"/>
<text x="64.5" y="437.3" class="st">active</text>
<rect x="254" y="403" width="112" height="24" rx="4" fill="#e2d96e" stroke="#9c9cab" stroke-width="0.8"/>
<path d="M258 403 h20 v24 h-20 a4 4 0 0 1 -4 -4 v-16 a4 4 0 0 1 4 -4 z" fill="rgba(0,0,0,0.05)"/>
<line x1="278" y1="403" x2="278" y2="427" stroke="rgba(0,0,0,0.1)" stroke-width="0.8"/>
<rect x="254" y="403" width="112" height="24" rx="4" fill="none" stroke="#9c9cab" stroke-width="0.8"/>
<g transform="translate(266,415)"><g fill="none" stroke="#fff" stroke-width="1.6"><path d="M-6 -6 H-3.6 L0.6 5.6 H3.2"/><path d="M-6 5.6 H-3.6 L0.6 -6 H3.2"/></g><path d="M2.6 -9.2 L5.9 -6 L2.6 -2.8 z M2.6 2.4 L5.9 5.6 L2.6 8.8 z" fill="#fff"/></g>
<text x="284.4" y="419" class="lbl" style="">set msg.topic</text>
<rect x="250" y="411" width="8" height="8" rx="2" class="port"/>
<rect x="362" y="411" width="8" height="8" rx="2" class="port"/>
<rect x="46" y="451" width="160" height="24" rx="4" fill="#e9967a" stroke="#9c9cab" stroke-width="0.8"/>
<path d="M50 451 h20 v24 h-20 a4 4 0 0 1 -4 -4 v-16 a4 4 0 0 1 4 -4 z" fill="rgba(0,0,0,0.05)"/>
<line x1="70" y1="451" x2="70" y2="475" stroke="rgba(0,0,0,0.1)" stroke-width="0.8"/>
<rect x="46" y="451" width="160" height="24" rx="4" fill="none" stroke="#9c9cab" stroke-width="0.8"/>
<g transform="translate(58,463)"><circle r="6.6" fill="#fff"/><path d="M0.00 -5.90 L2.25 -3.90 L5.11 -2.95 L4.50 0.00 L5.11 2.95 L2.25 3.90 L0.00 5.90 L-2.25 3.90 L-5.11 2.95 L-4.50 0.00 L-5.11 -2.95 L-2.25 -3.90 z" fill="#f4aa00"/><path d="M0 0 L0.00 -5.20 M0 0 L4.50 -2.60 M0 0 L4.50 2.60 M0 0 L0.00 5.20 M0 0 L-4.50 2.60 M0 0 L-4.50 -2.60" stroke="#a8ac00" stroke-width="1.3"/><circle r="1.6" fill="#a8ac00"/><circle cx="0.00" cy="-4.90" r="0.9" fill="#6d9424"/><circle cx="4.24" cy="-2.45" r="0.9" fill="#6d9424"/><circle cx="4.24" cy="2.45" r="0.9" fill="#6d9424"/><circle cx="0.00" cy="4.90" r="0.9" fill="#6d9424"/><circle cx="-4.24" cy="2.45" r="0.9" fill="#6d9424"/><circle cx="-4.24" cy="-2.45" r="0.9" fill="#6d9424"/></g>
<text x="76.4" y="467" class="lbl" style="">READ: FC3, Address 7</text>
<rect x="42" y="459" width="8" height="8" rx="2" class="port"/>
<rect x="202" y="453.8" width="8" height="8" rx="2" class="port"/>
<rect x="202" y="464.2" width="8" height="8" rx="2" class="port"/>
<rect x="51" y="475.6" width="39.5" height="11" fill="#fff"/>
<rect x="52.5" y="478.2" width="7.6" height="7.6" rx="1.6" fill="#fff" stroke="#55aa88" stroke-width="2.2"/>
<text x="64.5" y="485.3" class="st">active</text>
<rect x="254" y="451" width="112" height="24" rx="4" fill="#e2d96e" stroke="#9c9cab" stroke-width="0.8"/>
<path d="M258 451 h20 v24 h-20 a4 4 0 0 1 -4 -4 v-16 a4 4 0 0 1 4 -4 z" fill="rgba(0,0,0,0.05)"/>
<line x1="278" y1="451" x2="278" y2="475" stroke="rgba(0,0,0,0.1)" stroke-width="0.8"/>
<rect x="254" y="451" width="112" height="24" rx="4" fill="none" stroke="#9c9cab" stroke-width="0.8"/>
<g transform="translate(266,463)"><g fill="none" stroke="#fff" stroke-width="1.6"><path d="M-6 -6 H-3.6 L0.6 5.6 H3.2"/><path d="M-6 5.6 H-3.6 L0.6 -6 H3.2"/></g><path d="M2.6 -9.2 L5.9 -6 L2.6 -2.8 z M2.6 2.4 L5.9 5.6 L2.6 8.8 z" fill="#fff"/></g>
<text x="284.4" y="467" class="lbl" style="">set msg.topic</text>
<rect x="250" y="459" width="8" height="8" rx="2" class="port"/>
<rect x="362" y="459" width="8" height="8" rx="2" class="port"/>
<rect x="398" y="451" width="80" height="24" rx="4" fill="#e2d96e" stroke="#9c9cab" stroke-width="0.8"/>
<path d="M402 451 h20 v24 h-20 a4 4 0 0 1 -4 -4 v-16 a4 4 0 0 1 4 -4 z" fill="rgba(0,0,0,0.05)"/>
<line x1="422" y1="451" x2="422" y2="475" stroke="rgba(0,0,0,0.1)" stroke-width="0.8"/>
<rect x="398" y="451" width="80" height="24" rx="4" fill="none" stroke="#9c9cab" stroke-width="0.8"/>
<g transform="translate(410,463)"><g fill="#fff"><rect x="-6.35" y="-4.25" width="1.5" height="1.5"/><rect x="-6.35" y="-0.75" width="1.5" height="1.5"/><rect x="-6.35" y="2.55" width="1.5" height="1.5"/><rect x="-4.05" y="-4.25" width="1.5" height="1.5"/><rect x="-4.05" y="-0.75" width="1.5" height="1.5"/><rect x="-4.05" y="2.55" width="1.5" height="1.5"/><path d="M-1 -3 L2 0 L-1 3 z"/><rect x="3.1" y="-4.1" width="4.8" height="8"/></g></g>
<text x="428.4" y="467" class="lbl" style="">join 2</text>
<rect x="394" y="459" width="8" height="8" rx="2" class="port"/>
<rect x="474" y="459" width="8" height="8" rx="2" class="port"/>
<rect x="600" y="452.6" width="26.4" height="20.8" rx="4" fill="#eeeef8" stroke="#9c9cab" stroke-width="0.8"/>
<rect x="510" y="451" width="96" height="24" rx="4" fill="#87a980" stroke="#9c9cab" stroke-width="0.8"/>
<path d="M582 451 h20 a4 4 0 0 1 4 4 v16 a4 4 0 0 1 -4 4 h-20 z" fill="rgba(0,0,0,0.05)"/>
<line x1="582" y1="451" x2="582" y2="475" stroke="rgba(0,0,0,0.1)" stroke-width="0.8"/>
<rect x="510" y="451" width="96" height="24" rx="4" fill="none" stroke="#9c9cab" stroke-width="0.8"/>
<g transform="translate(594,463)"><g fill="#fff"><rect x="-4" y="-6.8" width="8" height="1.6" opacity="0.6"/><rect x="-4" y="-3.7" width="8" height="1.6" opacity="0.6"/><rect x="-4" y="-0.6" width="8" height="1.6" opacity="0.6"/><rect x="-4" y="2.7" width="8" height="1.6"/><rect x="-4" y="5.9" width="8" height="1.6"/></g></g>
<text x="575.6" y="467" text-anchor="end" class="lbl" style="font-style:italic;">Reg 7,8</text>
<rect x="506" y="459" width="8" height="8" rx="2" class="port"/>
<rect x="610" y="455.8" width="12.8" height="14.4" rx="2.5" fill="#87a980" stroke="#999" stroke-width="0.5"/>
<rect x="46" y="499" width="160" height="24" rx="4" fill="#e9967a" stroke="#9c9cab" stroke-width="0.8"/>
<path d="M50 499 h20 v24 h-20 a4 4 0 0 1 -4 -4 v-16 a4 4 0 0 1 4 -4 z" fill="rgba(0,0,0,0.05)"/>
<line x1="70" y1="499" x2="70" y2="523" stroke="rgba(0,0,0,0.1)" stroke-width="0.8"/>
<rect x="46" y="499" width="160" height="24" rx="4" fill="none" stroke="#9c9cab" stroke-width="0.8"/>
<g transform="translate(58,511)"><circle r="6.6" fill="#fff"/><path d="M0.00 -5.90 L2.25 -3.90 L5.11 -2.95 L4.50 0.00 L5.11 2.95 L2.25 3.90 L0.00 5.90 L-2.25 3.90 L-5.11 2.95 L-4.50 0.00 L-5.11 -2.95 L-2.25 -3.90 z" fill="#f4aa00"/><path d="M0 0 L0.00 -5.20 M0 0 L4.50 -2.60 M0 0 L4.50 2.60 M0 0 L0.00 5.20 M0 0 L-4.50 2.60 M0 0 L-4.50 -2.60" stroke="#a8ac00" stroke-width="1.3"/><circle r="1.6" fill="#a8ac00"/><circle cx="0.00" cy="-4.90" r="0.9" fill="#6d9424"/><circle cx="4.24" cy="-2.45" r="0.9" fill="#6d9424"/><circle cx="4.24" cy="2.45" r="0.9" fill="#6d9424"/><circle cx="0.00" cy="4.90" r="0.9" fill="#6d9424"/><circle cx="-4.24" cy="2.45" r="0.9" fill="#6d9424"/><circle cx="-4.24" cy="-2.45" r="0.9" fill="#6d9424"/></g>
<text x="76.4" y="515" class="lbl" style="">READ: FC3, Address 8</text>
<rect x="42" y="507" width="8" height="8" rx="2" class="port"/>
<rect x="202" y="501.8" width="8" height="8" rx="2" class="port"/>
<rect x="202" y="512.2" width="8" height="8" rx="2" class="port"/>
<rect x="51" y="523.6" width="39.5" height="11" fill="#fff"/>
<rect x="52.5" y="526.2" width="7.6" height="7.6" rx="1.6" fill="#fff" stroke="#55aa88" stroke-width="2.2"/>
<text x="64.5" y="533.3" class="st">active</text>
<rect x="254" y="499" width="112" height="24" rx="4" fill="#e2d96e" stroke="#9c9cab" stroke-width="0.8"/>
<path d="M258 499 h20 v24 h-20 a4 4 0 0 1 -4 -4 v-16 a4 4 0 0 1 4 -4 z" fill="rgba(0,0,0,0.05)"/>
<line x1="278" y1="499" x2="278" y2="523" stroke="rgba(0,0,0,0.1)" stroke-width="0.8"/>
<rect x="254" y="499" width="112" height="24" rx="4" fill="none" stroke="#9c9cab" stroke-width="0.8"/>
<g transform="translate(266,511)"><g fill="none" stroke="#fff" stroke-width="1.6"><path d="M-6 -6 H-3.6 L0.6 5.6 H3.2"/><path d="M-6 5.6 H-3.6 L0.6 -6 H3.2"/></g><path d="M2.6 -9.2 L5.9 -6 L2.6 -2.8 z M2.6 2.4 L5.9 5.6 L2.6 8.8 z" fill="#fff"/></g>
<text x="284.4" y="515" class="lbl" style="">set msg.topic</text>
<rect x="250" y="507" width="8" height="8" rx="2" class="port"/>
<rect x="362" y="507" width="8" height="8" rx="2" class="port"/>
<rect x="46" y="547" width="160" height="24" rx="4" fill="#e9967a" stroke="#9c9cab" stroke-width="0.8"/>
<path d="M50 547 h20 v24 h-20 a4 4 0 0 1 -4 -4 v-16 a4 4 0 0 1 4 -4 z" fill="rgba(0,0,0,0.05)"/>
<line x1="70" y1="547" x2="70" y2="571" stroke="rgba(0,0,0,0.1)" stroke-width="0.8"/>
<rect x="46" y="547" width="160" height="24" rx="4" fill="none" stroke="#9c9cab" stroke-width="0.8"/>
<g transform="translate(58,559)"><circle r="6.6" fill="#fff"/><path d="M0.00 -5.90 L2.25 -3.90 L5.11 -2.95 L4.50 0.00 L5.11 2.95 L2.25 3.90 L0.00 5.90 L-2.25 3.90 L-5.11 2.95 L-4.50 0.00 L-5.11 -2.95 L-2.25 -3.90 z" fill="#f4aa00"/><path d="M0 0 L0.00 -5.20 M0 0 L4.50 -2.60 M0 0 L4.50 2.60 M0 0 L0.00 5.20 M0 0 L-4.50 2.60 M0 0 L-4.50 -2.60" stroke="#a8ac00" stroke-width="1.3"/><circle r="1.6" fill="#a8ac00"/><circle cx="0.00" cy="-4.90" r="0.9" fill="#6d9424"/><circle cx="4.24" cy="-2.45" r="0.9" fill="#6d9424"/><circle cx="4.24" cy="2.45" r="0.9" fill="#6d9424"/><circle cx="0.00" cy="4.90" r="0.9" fill="#6d9424"/><circle cx="-4.24" cy="2.45" r="0.9" fill="#6d9424"/><circle cx="-4.24" cy="-2.45" r="0.9" fill="#6d9424"/></g>
<text x="76.4" y="563" class="lbl" style="">READ: FC3, Address 9</text>
<rect x="42" y="555" width="8" height="8" rx="2" class="port"/>
<rect x="202" y="549.8" width="8" height="8" rx="2" class="port"/>
<rect x="202" y="560.2" width="8" height="8" rx="2" class="port"/>
<rect x="51" y="571.6" width="39.5" height="11" fill="#fff"/>
<rect x="52.5" y="574.2" width="7.6" height="7.6" rx="1.6" fill="#fff" stroke="#55aa88" stroke-width="2.2"/>
<text x="64.5" y="581.3" class="st">active</text>
<rect x="254" y="547" width="112" height="24" rx="4" fill="#e2d96e" stroke="#9c9cab" stroke-width="0.8"/>
<path d="M258 547 h20 v24 h-20 a4 4 0 0 1 -4 -4 v-16 a4 4 0 0 1 4 -4 z" fill="rgba(0,0,0,0.05)"/>
<line x1="278" y1="547" x2="278" y2="571" stroke="rgba(0,0,0,0.1)" stroke-width="0.8"/>
<rect x="254" y="547" width="112" height="24" rx="4" fill="none" stroke="#9c9cab" stroke-width="0.8"/>
<g transform="translate(266,559)"><g fill="none" stroke="#fff" stroke-width="1.6"><path d="M-6 -6 H-3.6 L0.6 5.6 H3.2"/><path d="M-6 5.6 H-3.6 L0.6 -6 H3.2"/></g><path d="M2.6 -9.2 L5.9 -6 L2.6 -2.8 z M2.6 2.4 L5.9 5.6 L2.6 8.8 z" fill="#fff"/></g>
<text x="284.4" y="563" class="lbl" style="">set msg.topic</text>
<rect x="250" y="555" width="8" height="8" rx="2" class="port"/>
<rect x="362" y="555" width="8" height="8" rx="2" class="port"/>
<rect x="398" y="547" width="80" height="24" rx="4" fill="#e2d96e" stroke="#9c9cab" stroke-width="0.8"/>
<path d="M402 547 h20 v24 h-20 a4 4 0 0 1 -4 -4 v-16 a4 4 0 0 1 4 -4 z" fill="rgba(0,0,0,0.05)"/>
<line x1="422" y1="547" x2="422" y2="571" stroke="rgba(0,0,0,0.1)" stroke-width="0.8"/>
<rect x="398" y="547" width="80" height="24" rx="4" fill="none" stroke="#9c9cab" stroke-width="0.8"/>
<g transform="translate(410,559)"><g fill="#fff"><rect x="-6.35" y="-4.25" width="1.5" height="1.5"/><rect x="-6.35" y="-0.75" width="1.5" height="1.5"/><rect x="-6.35" y="2.55" width="1.5" height="1.5"/><rect x="-4.05" y="-4.25" width="1.5" height="1.5"/><rect x="-4.05" y="-0.75" width="1.5" height="1.5"/><rect x="-4.05" y="2.55" width="1.5" height="1.5"/><path d="M-1 -3 L2 0 L-1 3 z"/><rect x="3.1" y="-4.1" width="4.8" height="8"/></g></g>
<text x="428.4" y="563" class="lbl" style="">join 2</text>
<rect x="394" y="555" width="8" height="8" rx="2" class="port"/>
<rect x="474" y="555" width="8" height="8" rx="2" class="port"/>
<rect x="600" y="548.6" width="26.4" height="20.8" rx="4" fill="#eeeef8" stroke="#9c9cab" stroke-width="0.8"/>
<rect x="510" y="547" width="96" height="24" rx="4" fill="#87a980" stroke="#9c9cab" stroke-width="0.8"/>
<path d="M582 547 h20 a4 4 0 0 1 4 4 v16 a4 4 0 0 1 -4 4 h-20 z" fill="rgba(0,0,0,0.05)"/>
<line x1="582" y1="547" x2="582" y2="571" stroke="rgba(0,0,0,0.1)" stroke-width="0.8"/>
<rect x="510" y="547" width="96" height="24" rx="4" fill="none" stroke="#9c9cab" stroke-width="0.8"/>
<g transform="translate(594,559)"><g fill="#fff"><rect x="-4" y="-6.8" width="8" height="1.6" opacity="0.6"/><rect x="-4" y="-3.7" width="8" height="1.6" opacity="0.6"/><rect x="-4" y="-0.6" width="8" height="1.6" opacity="0.6"/><rect x="-4" y="2.7" width="8" height="1.6"/><rect x="-4" y="5.9" width="8" height="1.6"/></g></g>
<text x="575.6" y="563" text-anchor="end" class="lbl" style="font-style:italic;">Reg 9,10</text>
<rect x="506" y="555" width="8" height="8" rx="2" class="port"/>
<rect x="610" y="551.8" width="12.8" height="14.4" rx="2.5" fill="#87a980" stroke="#999" stroke-width="0.5"/>
<rect x="46" y="595" width="176" height="24" rx="4" fill="#e9967a" stroke="#9c9cab" stroke-width="0.8"/>
<path d="M50 595 h20 v24 h-20 a4 4 0 0 1 -4 -4 v-16 a4 4 0 0 1 4 -4 z" fill="rgba(0,0,0,0.05)"/>
<line x1="70" y1="595" x2="70" y2="619" stroke="rgba(0,0,0,0.1)" stroke-width="0.8"/>
<rect x="46" y="595" width="176" height="24" rx="4" fill="none" stroke="#9c9cab" stroke-width="0.8"/>
<g transform="translate(58,607)"><circle r="6.6" fill="#fff"/><path d="M0.00 -5.90 L2.25 -3.90 L5.11 -2.95 L4.50 0.00 L5.11 2.95 L2.25 3.90 L0.00 5.90 L-2.25 3.90 L-5.11 2.95 L-4.50 0.00 L-5.11 -2.95 L-2.25 -3.90 z" fill="#f4aa00"/><path d="M0 0 L0.00 -5.20 M0 0 L4.50 -2.60 M0 0 L4.50 2.60 M0 0 L0.00 5.20 M0 0 L-4.50 2.60 M0 0 L-4.50 -2.60" stroke="#a8ac00" stroke-width="1.3"/><circle r="1.6" fill="#a8ac00"/><circle cx="0.00" cy="-4.90" r="0.9" fill="#6d9424"/><circle cx="4.24" cy="-2.45" r="0.9" fill="#6d9424"/><circle cx="4.24" cy="2.45" r="0.9" fill="#6d9424"/><circle cx="0.00" cy="4.90" r="0.9" fill="#6d9424"/><circle cx="-4.24" cy="2.45" r="0.9" fill="#6d9424"/><circle cx="-4.24" cy="-2.45" r="0.9" fill="#6d9424"/></g>
<text x="76.4" y="611" class="lbl" style="">READ: FC3, Address 10</text>
<rect x="42" y="603" width="8" height="8" rx="2" class="port"/>
<rect x="218" y="597.8" width="8" height="8" rx="2" class="port"/>
<rect x="218" y="608.2" width="8" height="8" rx="2" class="port"/>
<rect x="51" y="619.6" width="39.5" height="11" fill="#fff"/>
<rect x="52.5" y="622.2" width="7.6" height="7.6" rx="1.6" fill="#fff" stroke="#55aa88" stroke-width="2.2"/>
<text x="64.5" y="629.3" class="st">active</text>
<rect x="254" y="595" width="112" height="24" rx="4" fill="#e2d96e" stroke="#9c9cab" stroke-width="0.8"/>
<path d="M258 595 h20 v24 h-20 a4 4 0 0 1 -4 -4 v-16 a4 4 0 0 1 4 -4 z" fill="rgba(0,0,0,0.05)"/>
<line x1="278" y1="595" x2="278" y2="619" stroke="rgba(0,0,0,0.1)" stroke-width="0.8"/>
<rect x="254" y="595" width="112" height="24" rx="4" fill="none" stroke="#9c9cab" stroke-width="0.8"/>
<g transform="translate(266,607)"><g fill="none" stroke="#fff" stroke-width="1.6"><path d="M-6 -6 H-3.6 L0.6 5.6 H3.2"/><path d="M-6 5.6 H-3.6 L0.6 -6 H3.2"/></g><path d="M2.6 -9.2 L5.9 -6 L2.6 -2.8 z M2.6 2.4 L5.9 5.6 L2.6 8.8 z" fill="#fff"/></g>
<text x="284.4" y="611" class="lbl" style="">set msg.topic</text>
<rect x="250" y="603" width="8" height="8" rx="2" class="port"/>
<rect x="362" y="603" width="8" height="8" rx="2" class="port"/>
<rect x="510" y="595" width="96" height="24" rx="4" fill="#d9e8a6" stroke="#9c9cab" stroke-width="0.8"/>
<path d="M514 595 h20 v24 h-20 a4 4 0 0 1 -4 -4 v-16 a4 4 0 0 1 4 -4 z" fill="rgba(0,0,0,0.05)"/>
<line x1="534" y1="595" x2="534" y2="619" stroke="rgba(0,0,0,0.1)" stroke-width="0.8"/>
<rect x="510" y="595" width="96" height="24" rx="4" fill="none" stroke="#9c9cab" stroke-width="0.8"/>
<g transform="translate(522,607)"><g fill="none" stroke="#fafaf0" stroke-width="1.3"><path d="M1.6 -6.2 A6.4 6.4 0 1 1 -4.6 -4.4"/><line x1="0" y1="0" x2="-4.2" y2="-4.5"/></g><circle cx="-0.3" cy="-6.5" r="1.1" fill="#fafaf0"/><circle cx="0" cy="0" r="1.1" fill="#fafaf0"/></g>
<text x="540.4" y="611" class="lbl" style="">flow-timer</text>
<rect x="506" y="603" width="8" height="8" rx="2" class="port"/>
<rect x="602" y="603" width="8" height="8" rx="2" class="port"/>
<rect x="513.5" y="619.6" width="79.5" height="11" fill="#fff"/>
<text x="515.5" y="628.5" class="st">10POLLS: 323ms</text>
</svg>
<div id="scrolltrack" class="abs"></div>
<div id="thumb" class="abs"></div>

<div id="sbtabbar" class="abs"></div>
<div id="dbgtab" class="abs"></div>
<svg class="abs" style="left:689.5px;top:69.6px" width="20" height="20" viewBox="-10 -10 20 20"><g transform="scale(1.0)"><path d="M-2.7 -3.7 A2.7 2.2 0 0 1 2.7 -3.7 Z" fill="#879090"/><path d="M-3.7 -2.6 H3.7 V2.8 Q3.7 5.4 0 5.5 Q-3.7 5.4 -3.7 2.8 Z" fill="#879090"/><path d="M0 -2.6 V5.6" stroke="#fff" stroke-width="0.9"/><g stroke="#879090" stroke-width="1.1" fill="none"><path d="M-3.7 -2 L-5.6 -4.3 M3.7 -2 L5.6 -4.3 M-6.4 1 H-3.7 M3.7 1 H6.4 M-3.7 3.8 L-5.6 6.1 M3.7 3.8 L5.6 6.1"/></g></g></svg>
<div id="dbgtxt" class="abs">debug</div>
<div id="bugbtn" class="abs"></div>
<svg class="abs" style="left:831.8px;top:69.6px" width="20" height="20" viewBox="-10 -10 20 20"><g transform="scale(1.0)"><path d="M-2.7 -3.7 A2.7 2.2 0 0 1 2.7 -3.7 Z" fill="#555"/><path d="M-3.7 -2.6 H3.7 V2.8 Q3.7 5.4 0 5.5 Q-3.7 5.4 -3.7 2.8 Z" fill="#555"/><path d="M0 -2.6 V5.6" stroke="#e6e6f2" stroke-width="0.9"/><g stroke="#555" stroke-width="1.1" fill="none"><path d="M-3.7 -2 L-5.6 -4.3 M3.7 -2 L5.6 -4.3 M-6.4 1 H-3.7 M3.7 1 H6.4 M-3.7 3.8 L-5.6 6.1 M3.7 3.8 L5.6 6.1"/></g></g></svg>
<svg class="abs" style="left:868px;top:75px" width="16" height="10"><path d="M3.5 2.5 h8.6 l-4.3 5 z" fill="#777784"/></svg>

<div id="toolbar" class="abs"></div>
<div class="abs tbtn" style="left:706px;width:97px"></div>
<svg class="abs" style="left:710px;top:106px" width="24" height="24" viewBox="710 106 24 24"><path d="M714.9 112.9 H725.1 L721.9 116.9 V122.8 L718.2 120.6 V116.9 Z" fill="#6e6e7a"/></svg>
<div class="abs tbtxt" style="left:729px">all nodes</div>
<svg class="abs" style="left:787px;top:112px" width="12" height="10"><path d="M2 3 h8 l-4 4.5 z" fill="#777"/></svg>
<div class="abs tbtn" style="left:813px;width:60px"></div>
<svg class="abs" style="left:816px;top:106px" width="24" height="24" viewBox="816 106 24 24"><path d="M822 113.2 H832 V114.8 H822 Z M825 113.5 V111.6 H829 V113.5" fill="#6e6e7a" stroke="none"/><path d="M825.2 113.4 V112.1 H828.8 V113.4" fill="none" stroke="#6e6e7a" stroke-width="1"/><path d="M823 115.2 H831 V122.8 H823 Z" fill="#6e6e7a"/><path d="M825.3 116.3 V121.8 M827 116.3 V121.8 M828.7 116.3 V121.8" stroke="#c9c9d3" stroke-width="0.8"/></svg>
<div class="abs tbtxt" style="left:836px">all</div>
<svg class="abs" style="left:858px;top:112px" width="12" height="10"><path d="M2 3 h8 l-4 4.5 z" fill="#777"/></svg>

<div id="msgs" class="abs"></div>
<div class="msg" style="top:140px">
<div class="mtime">15/09/2023, 13:47:23</div><div class="mnode">node: Reg 1,2</div>
<div class="mtopic">2 : msg : array[2]</div>
<div class="mval"><span class="tri"></span><span class="br">[</span> <span class="num">0</span>, <span class="num">10</span> <span class="br">]</span></div>
</div>
<div class="msg" style="top:212px">
<div class="mtime">15/09/2023, 13:47:24</div><div class="mnode">node: Reg 3,4</div>
<div class="mtopic">4 : msg : array[2]</div>
<div class="mval"><span class="tri"></span><span class="br">[</span> <span class="num">0</span>, <span class="num">250</span> <span class="br">]</span></div>
</div>
<div class="msg" style="top:284px">
<div class="mtime">15/09/2023, 13:47:24</div><div class="mnode">node: Reg 5,6</div>
<div class="mtopic">6 : msg : array[2]</div>
<div class="mval"><span class="tri"></span><span class="br">[</span> <span class="num">0</span>, <span class="num">3000</span> <span class="br">]</span></div>
</div>
<div class="msg" style="top:356px">
<div class="mtime">15/09/2023, 13:47:24</div><div class="mnode">node: Reg 7,8</div>
<div class="mtopic">8 : msg : array[2]</div>
<div class="mval"><span class="tri"></span><span class="br">[</span> <span class="num">0</span>, <span class="num">2000</span> <span class="br">]</span></div>
</div>
<div class="msg" style="top:428px">
<div class="mtime">15/09/2023, 13:47:24</div><div class="mnode">node: Reg 9,10</div>
<div class="mtopic">10 : msg : array[2]</div>
<div class="mval"><span class="tri"></span><span class="br">[</span> <span class="num">0</span>, <span class="num">1100</span> <span class="br">]</span></div>
</div>
<div id="paleline" class="abs"></div>
</body></html>
